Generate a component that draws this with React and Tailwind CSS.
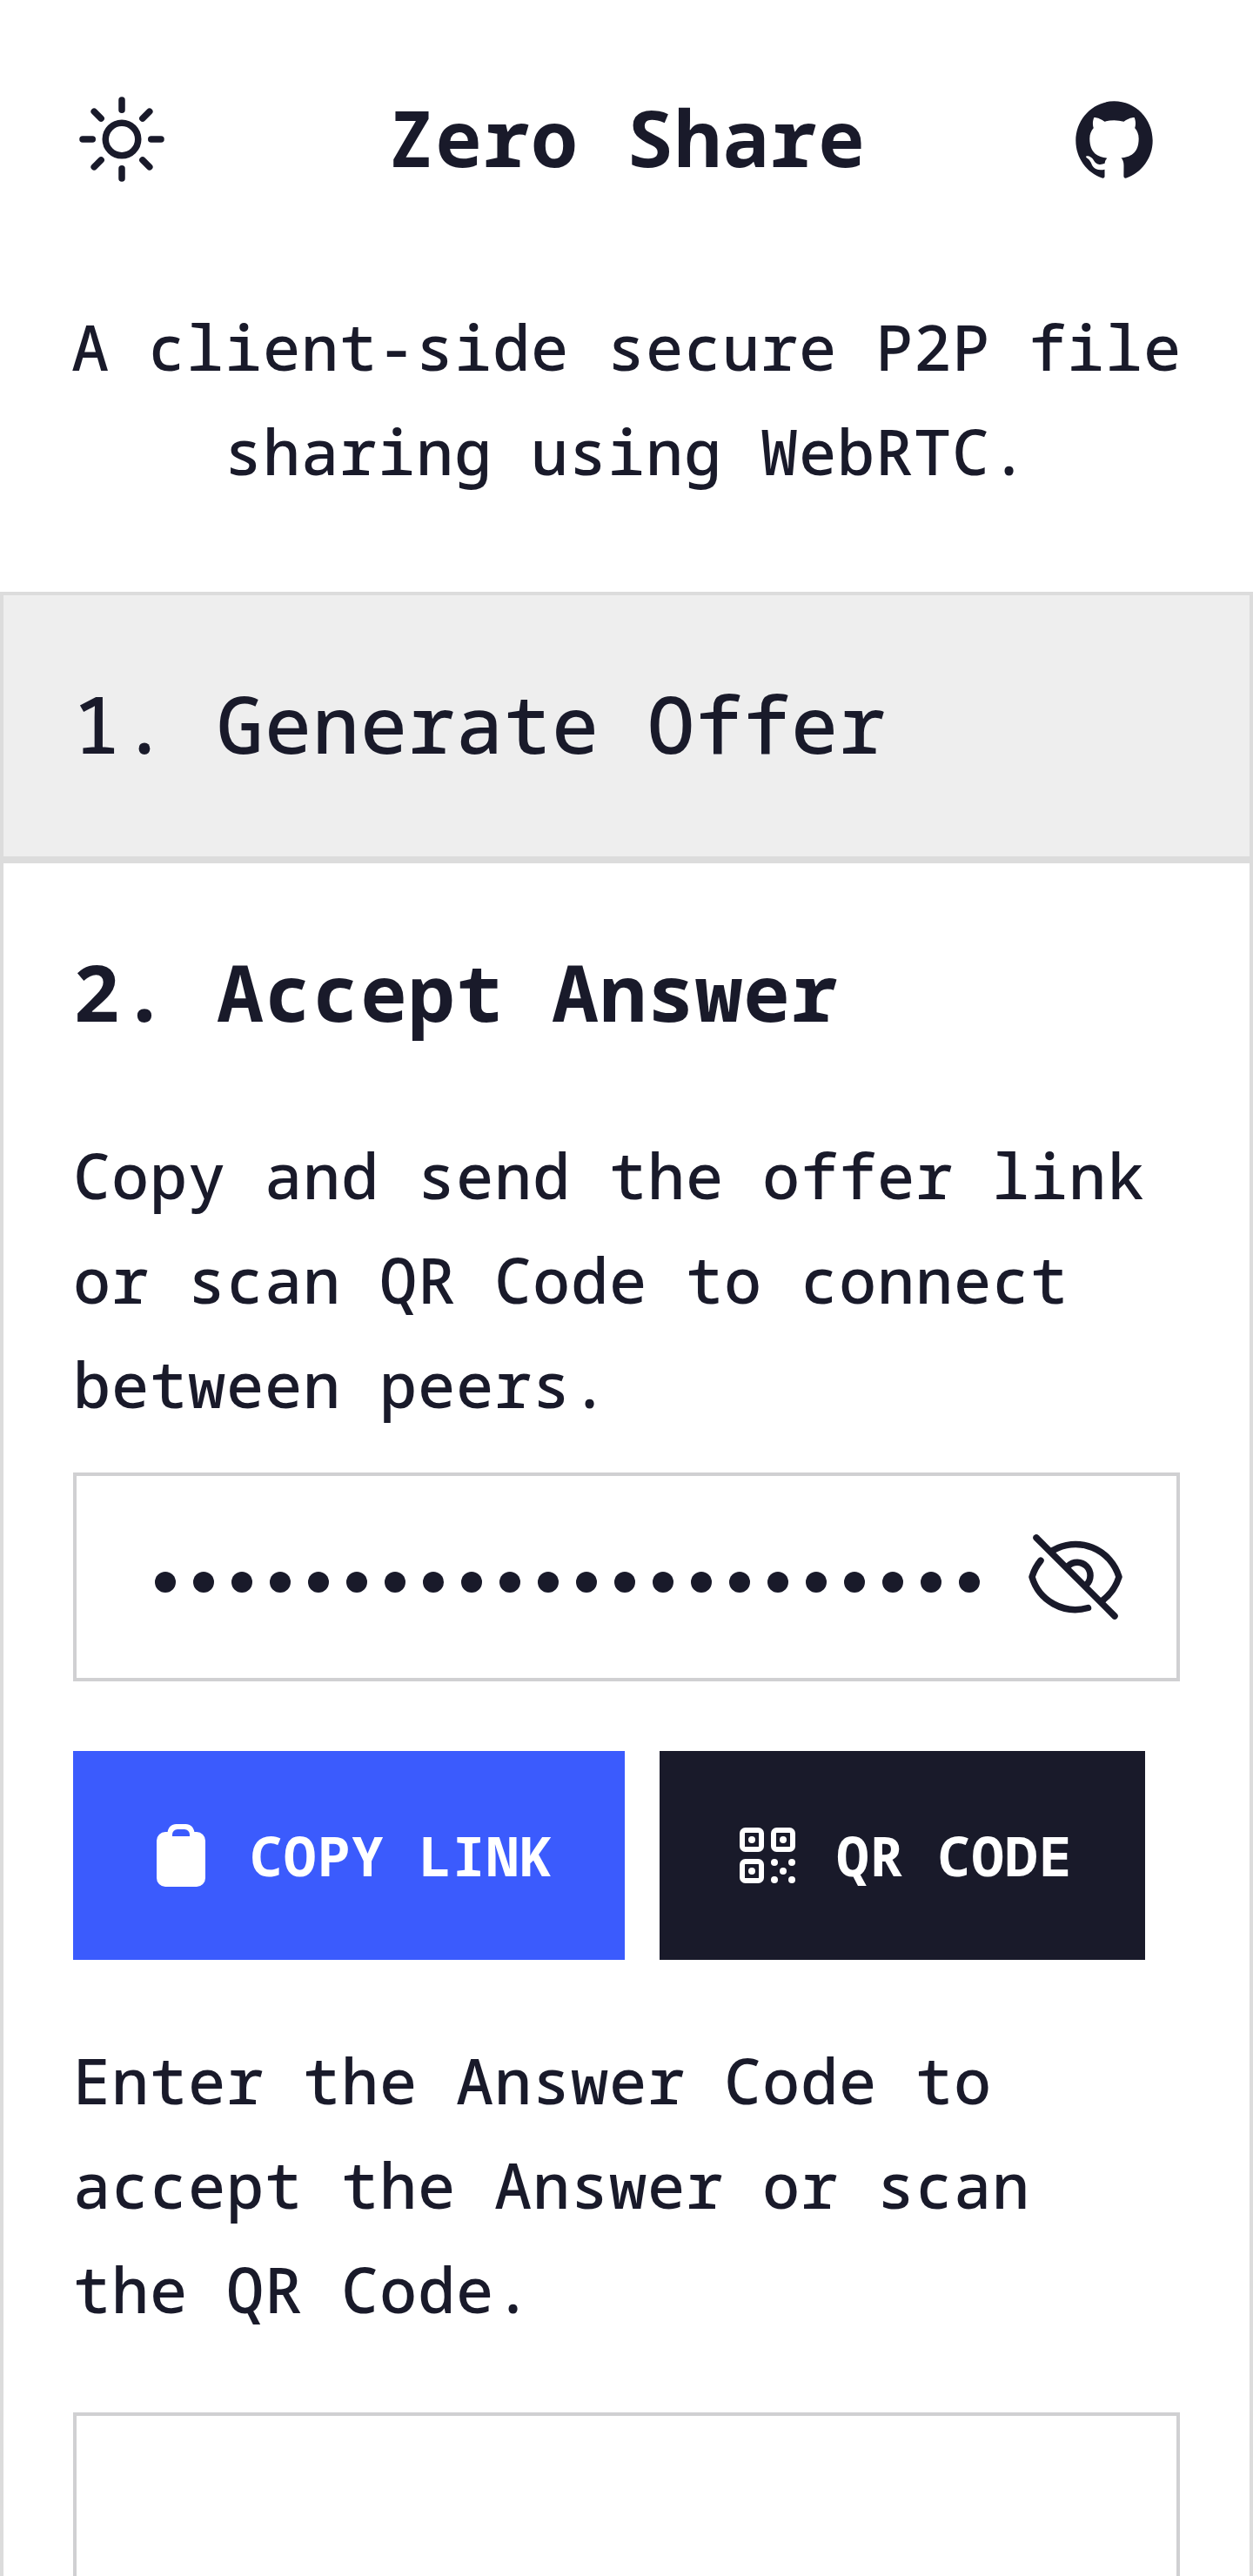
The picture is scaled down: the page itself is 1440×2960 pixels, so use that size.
import { IoLogoGithub } from "react-icons/io5";

function SunIcon() {
  return (
    <svg className="size-[120px]" viewBox="0 0 24 24" fill="none" stroke="currentColor" strokeWidth="1.5" strokeLinecap="round" strokeLinejoin="round">
      <path d="M12 3v2.25m6.364.386l-1.591 1.591M21 12h-2.25m-.386 6.364l-1.591-1.591M12 18.75V21m-4.773-4.227l-1.591 1.591M5.25 12H3m4.227-4.773L5.636 5.636M15.75 12a3.75 3.75 0 11-7.5 0 3.75 3.75 0 017.5 0z" />
    </svg>
  );
}

function EyeOffIcon() {
  return (
    <svg className="size-[120px]" viewBox="0 0 24 24" fill="none" stroke="currentColor" strokeWidth="1.5" strokeLinecap="round" strokeLinejoin="round">
      <path d="M3 3l18 18" />
      <path d="M6.8 5.9A10.42 10.42 0 0 1 22 12A10.8 10.8 0 0 1 18.1 17.5" />
      <path d="M4 8.25A10.8 10.8 0 0 0 2 12A10.42 10.42 0 0 0 14.9 19.1" />
      <path d="M10.3 9.5A3 3 0 0 1 14.5 13.8" />
    </svg>
  );
}

function ClipboardIcon() {
  return (
    <svg className="size-[72px]" viewBox="0 0 72 72" fill="currentColor">
      <path
        fillRule="evenodd"
        d="M18 9H20.6C21.5 3.8 25 0 30.5 0H41.5C47 0 50.5 3.8 51.4 9H54A10 10 0 0 1 64 19V62A10 10 0 0 1 54 72H18A10 10 0 0 1 8 62V19A10 10 0 0 1 18 9ZM26 14H46V12A6 6 0 0 0 40 6H32A6 6 0 0 0 26 12Z"
      />
    </svg>
  );
}

function QrIcon() {
  return (
    <svg className="size-[72px]" viewBox="0 0 72 72" fill="currentColor">
      <g fill="none" stroke="currentColor" strokeWidth="6">
        <rect x="7" y="7" width="22" height="22" rx="3.5" />
        <rect x="43" y="7" width="22" height="22" rx="3.5" />
        <rect x="7" y="43" width="22" height="22" rx="3.5" />
      </g>
      <circle cx="18" cy="18" r="4" />
      <circle cx="54" cy="18" r="4" />
      <circle cx="18" cy="54" r="4" />
      <circle cx="44" cy="44" r="4" />
      <circle cx="64" cy="44" r="4" />
      <circle cx="54" cy="54" r="4" />
      <circle cx="44" cy="64" r="4" />
      <circle cx="64" cy="64" r="4" />
    </svg>
  );
}

function Heading({ children, active }) {
  return (
    <h2 className={active ? "text-[90px] leading-[120px] tracking-[1px] font-bold" : "text-[90px] leading-[120px] tracking-[1px] font-medium"}>
      {children}
    </h2>
  );
}

export default function App() {
  return (
    <div className="flex h-[2960px] w-[1440px] flex-col overflow-hidden bg-white font-['Noto_Sans_Mono','Liberation_Mono',monospace] text-[72px] leading-[120px] font-medium tracking-[0.8px] text-[#191a2a]">
      <header className="mt-[100px] flex h-[120px] items-center justify-between px-20">
        <button type="button" aria-label="Toggle theme">
          <SunIcon />
        </button>
        <h1 className="-mt-1.5 text-[90px] leading-[120px] font-bold tracking-[1px]">Zero Share</h1>
        <a href="#" aria-label="GitHub" className="flex size-[120px] items-center">
          <IoLogoGithub className="-ml-[10px] size-[101px]" />
        </a>
      </header>
      <p className="mt-[118px] px-20 text-center whitespace-nowrap">
        A client-side secure P2P file
        <br />
        sharing using WebRTC.
      </p>

      <section className="mt-[102px] h-[308px] shrink-0 border-4 border-[#dcdcdc] bg-[#eeeeee] px-20 pt-[87px]">
        <Heading>1. Generate Offer</Heading>
      </section>

      <section className="h-[2200px] shrink-0 border-4 border-[#dcdcdc] px-20 pt-[87px]">
        <Heading active>2. Accept Answer</Heading>
        <p className="mt-[91px] whitespace-nowrap">
          Copy and send the offer link
          <br />
          or scan QR Code to connect
          <br />
          between peers.
        </p>
        <div className="mt-[42px] flex h-[240px] w-[1272px] items-center justify-between border-4 border-[#d0d0d2] pr-[56px] pl-[90px]">
          <div className="mt-3 flex gap-5">
            {Array.from({ length: 22 }, (_, i) => (
              <span key={i} className="size-6 rounded-full bg-[#191a2a]" />
            ))}
          </div>
          <button type="button" aria-label="Show offer link">
            <EyeOffIcon />
          </button>
        </div>
        <div className="mt-20 flex gap-10 text-[63px] font-bold tracking-[1px] whitespace-nowrap text-white">
          <button type="button" className="flex h-[240px] w-[634px] items-center gap-[43px] bg-[#3b5bfd] pl-[88px]">
            <ClipboardIcon />
            <span>COPY LINK</span>
          </button>
          <button type="button" className="flex h-[240px] w-[558px] items-center gap-[43px] bg-[#191a2a] pl-[88px]">
            <QrIcon />
            <span>QR CODE</span>
          </button>
        </div>
        <p className="mt-[78px] whitespace-nowrap">
          Enter the Answer Code to
          <br />
          accept the Answer or scan
          <br />
          the QR Code.
        </p>
        <div className="mt-[82px] h-[480px] w-[1272px] border-4 border-[#d0d0d2]" />
      </section>
    </div>
  );
}
